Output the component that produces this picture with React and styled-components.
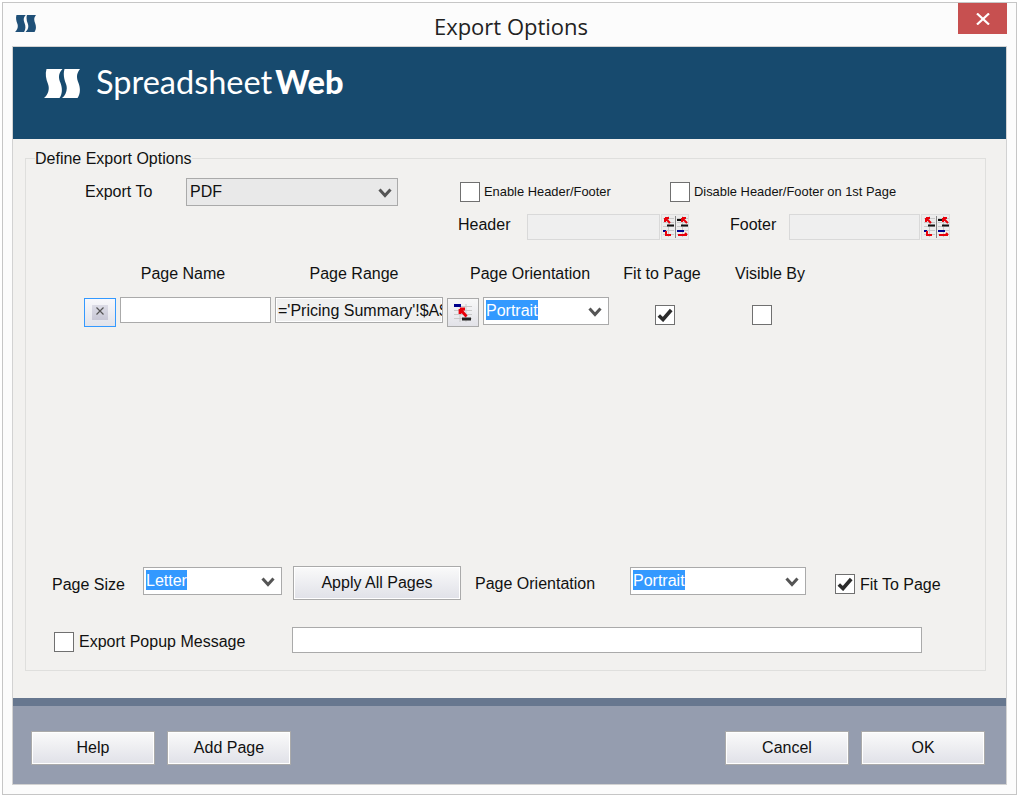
import React from "react"
import styled, { createGlobalStyle } from "styled-components"

const Global = createGlobalStyle`
  html, body { margin: 0; padding: 0; background: #fff; }
  body { font-family: "Liberation Sans", Arial, sans-serif; color: #111; }
`

const LogoMark = ({ size = 36, color = "#fff" }) => (
  <svg width={size} height={size * 29 / 36} viewBox="0 0 36 29">
    <path fill={color} d="M2.500 0H18.500C14 5 14.500 9 16.500 14C18.500 19 18.500 25 15.500 29H0C4 26 6 20 4 15C2 10 1 5 2.500 0Z" />
    <path fill={color} d="M20.500 0H36C32 5 32.500 9 34.500 14C36.500 19 36.500 25 33.500 29H18C22 26 24 20 22 15C20 10 19 5 20.500 0Z" />
  </svg>
)

const Chevron = () => (
  <svg width="14" height="10" viewBox="0 0 14 10">
    <path d="M1.500 1.500L7 7.500L12.500 1.500" fill="none" stroke="#555" strokeWidth="3" />
  </svg>
)

const Tick = () => (
  <svg width="16" height="14" viewBox="0 0 16 14">
    <path d="M1.800 7.500L6 11.500L14.200 2" fill="none" stroke="#2b2b2b" strokeWidth="3.600" />
  </svg>
)

const RangeGlyph = ({ x = 0, flip }) => (
  <g transform={`translate(${x} 0)`}>
    <path d="M0 2.500H11M0 6.500H11M0 10.500H11M0 14.500H11M0 18.500H11" stroke="#c9c9c9" />
    <path d="M5.500 0V21" stroke="#c9c9c9" />
    {flip ? (
      <>
        <path d="M0 4H4M4 9.500H11" stroke="#111" strokeWidth="2" />
        <path d="M5 2L10 7M5 2H9M5 2V6" stroke="#e8000a" strokeWidth="2" fill="none" />
        <path d="M0 15H7" stroke="#00008b" strokeWidth="2" />
        <path d="M1 19H10M10 19L8 17" stroke="#e8000a" strokeWidth="2" fill="none" />
      </>
    ) : (
      <>
        <path d="M4 9.500H11" stroke="#111" strokeWidth="2" />
        <path d="M2 2L7 7M2 2H6M2 2V6" stroke="#e8000a" strokeWidth="2" fill="none" />
        <path d="M0 15H3" stroke="#00008b" strokeWidth="2" />
        <path d="M3 15V19H8" stroke="#e8000a" strokeWidth="2" fill="none" />
      </>
    )}
  </g>
)

const HeaderFooterGlyph = () => (
  <svg width="26" height="22" viewBox="0 0 26 22">
    <RangeGlyph x={1} />
    <path d="M13.500 0V22" stroke="#888" />
    <RangeGlyph x={15} flip />
  </svg>
)

const PickGlyph = () => (
  <svg width="18" height="18" viewBox="0 0 18 18">
    <path d="M0 2.500H18M0 6.500H18M0 10.500H18M0 14.500H18M6 0V18M12 0V18" stroke="#c9c9c9" />
    <path d="M0 1.500H7" stroke="#00008b" strokeWidth="3" />
    <path d="M8 15H17" stroke="#222" strokeWidth="3" />
    <path d="M6 5L12.500 12.500M6 5H11M6 5V10" stroke="#e8000a" strokeWidth="2.800" fill="none" />
  </svg>
)

const CloseGlyph = () => (
  <svg width="14" height="12" viewBox="0 0 14 12">
    <path d="M1 0.500L13 11.500M13 0.500L1 11.500" stroke="#fff" strokeWidth="2.200" />
  </svg>
)

const SmallCross = () => (
  <svg width="8" height="8" viewBox="0 0 8 8">
    <path d="M0.500 0.500L7.500 7.500M7.500 0.500L0.500 7.500" stroke="#555" strokeWidth="1.200" />
  </svg>
)

const Select = ({ value, width, muted, $ml, $mt }) => (
  <SelectBox $w={width} $muted={muted} $ml={$ml} $mt={$mt}>
    <SelectText $muted={muted}>{value}</SelectText>
    <Chevron />
  </SelectBox>
)

const Check = ({ checked }) => <CheckBox>{checked && <Tick />}</CheckBox>

const App = () => (
  <>
    <Global />
    <Window>
      <TitleBar>
        <TitleIcon><LogoMark size={21} color="#1f5078" /></TitleIcon>
        <Title>Export Options</Title>
        <CloseButton><CloseGlyph /></CloseButton>
      </TitleBar>

      <Panel>
        <Banner>
          <LogoMark />
          <Brand>Spreadsheet<strong>Web</strong></Brand>
        </Banner>

        <Content>
          <Group>
            <Legend>Define Export Options</Legend>

            <Row $mt={12} $h={28}>
              <Label $ml={59} $w={101}>Export To</Label>
              <Select value="PDF" width={212} muted />
              <CheckField $ml={62} $w={210}>
                <Check />
                <SmallText>Enable Header/Footer</SmallText>
              </CheckField>
              <CheckField>
                <Check />
                <SmallText>Disable Header/Footer on 1st Page</SmallText>
              </CheckField>
            </Row>

            <Row $mt={8} $h={26}>
              <Label $ml={432} $w={69} $mt={-4}>Header</Label>
              <DisabledInput $w={133} />
              <IconButton $w={28} $h={26} $ml={1} $flat><HeaderFooterGlyph /></IconButton>
              <Label $ml={41} $w={59} $mt={-4}>Footer</Label>
              <DisabledInput $w={131} />
              <IconButton $w={29} $h={26} $ml={1} $flat><HeaderFooterGlyph /></IconButton>
            </Row>

            <Row $mt={22} $h={22}>
              <Heading $ml={74} $w={166} $mt={1}>Page Name</Heading>
              <Heading $w={176} $mt={1}>Page Range</Heading>
              <Heading $w={176} $mt={1}>Page Orientation</Heading>
              <Heading $w={88} $mt={1}>Fit to Page</Heading>
              <Heading $w={128} $mt={1}>Visible By</Heading>
            </Row>

            <Row $mt={13} $h={31} $start>
              <DeleteButton><DeleteSquare><SmallCross /></DeleteSquare></DeleteButton>
              <TextInput $w={151} $ml={4} readOnly value="" />
              <RangeInput readOnly value="='Pricing Summary'!$A$1:$H$40" />
              <IconButton $w={32} $h={29} $ml={4} $mt={1}><PickGlyph /></IconButton>
              <Select value="Portrait" width={126} $ml={4} />
              <CheckSlot $ml={46}><Check checked /></CheckSlot>
              <CheckSlot $ml={77}><Check /></CheckSlot>
            </Row>

            <Row $mt={238} $h={34}>
              <Label $ml={26} $w={91} $mt={3}>Page Size</Label>
              <Select value="Letter" width={139} $mt={-5} />
              <ApplyButton>Apply All Pages</ApplyButton>
              <Label $ml={14} $w={155} $mt={1}>Page Orientation</Label>
              <Select value="Portrait" width={176} $mt={-5} />
              <CheckField $ml={29} $mt={2} $gap={5}>
                <Check checked />
                <Label $mt={1}>Fit To Page</Label>
              </CheckField>
            </Row>

            <Row $mt={27} $h={26}>
              <CheckField $ml={28} $w={238} $gap={5} $mt={4}>
                <Check />
                <Label>Export Popup Message</Label>
              </CheckField>
              <TextInput $w={630} readOnly value="" />
            </Row>
          </Group>
        </Content>

        <Footer>
          <FooterGroup>
            <FooterButton>Help</FooterButton>
            <FooterButton>Add Page</FooterButton>
          </FooterGroup>
          <FooterGroup>
            <FooterButton>Cancel</FooterButton>
            <FooterButton>OK</FooterButton>
          </FooterGroup>
        </Footer>
      </Panel>
    </Window>
  </>
)

const Window = styled.div`
  box-sizing: border-box;
  width: 1015px;
  height: 793px;
  margin: 2px 0 0 2px;
  padding: 0 9px 9px;
  border: 1px solid #c6c6c6;
  background: #fcfcfc;
  display: flex;
  flex-direction: column;
`

const TitleBar = styled.div`
  height: 43px;
  margin: 0 -9px;
  padding: 0 9px 0 12px;
  display: grid;
  grid-template-columns: 1fr auto 1fr;
  align-items: start;
`

const TitleIcon = styled.div`
  margin-top: 12px;
`

const Title = styled.div`
  font-family: "Open Sans", sans-serif;
  font-size: 22px;
  line-height: 28px;
  margin-top: 9px;
  color: #222;
`

const CloseButton = styled.div`
  justify-self: end;
  width: 49px;
  height: 31px;
  background: #c75050;
  display: flex;
  align-items: center;
  justify-content: center;
`

const Panel = styled.div`
  flex: 1;
  border: 1px solid #d2d2d2;
  display: flex;
  flex-direction: column;
`

const Banner = styled.div`
  height: 92px;
  flex: none;
  box-sizing: border-box;
  padding: 0 0 19px 31px;
  background: #174a6e;
  display: flex;
  align-items: center;
  gap: 16px;
`

const Brand = styled.div`
  font-family: Lato, sans-serif;
  font-size: 32.500px;
  line-height: 34px;
  margin-top: -3px;
  color: #fff;
  strong { font-weight: 900; margin-left: 3px; }
`

const Content = styled.div`
  height: 559px;
  flex: none;
  box-sizing: border-box;
  padding: 11px 20px 0 12px;
  background: #f2f1ef;
`

const Group = styled.fieldset`
  margin: 0;
  padding: 0 0 17px;
  border: 1px solid #dfdfdd;
  min-width: 0;
`

const Legend = styled.legend`
  margin-left: 9px;
  padding: 0;
  font-size: 16px;
  line-height: 16px;
  position: relative;
  top: 1px;
`

const Row = styled.div`
  display: flex;
  align-items: ${p => (p.$start ? "flex-start" : "center")};
  height: ${p => p.$h}px;
  margin-top: ${p => p.$mt}px;
`

const Label = styled.div`
  font-size: 16px;
  line-height: 20px;
  white-space: nowrap;
  flex: none;
  width: ${p => (p.$w ? `${p.$w}px` : "auto")};
  margin-left: ${p => p.$ml || 0}px;
  margin-top: ${p => p.$mt || 0}px;
`

const Heading = styled(Label)`
  text-align: center;
`

const SmallText = styled.span`
  font-size: 12.900px;
  line-height: 20px;
  white-space: nowrap;
`

const SelectBox = styled.div`
  box-sizing: border-box;
  flex: none;
  width: ${p => p.$w}px;
  height: 28px;
  margin-left: ${p => p.$ml || 0}px;
  margin-top: ${p => p.$mt || 0}px;
  padding: 2px ${p => (p.$muted ? 5 : 6)}px 4px 2px;
  border: 1px solid #aaa;
  background: ${p => (p.$muted ? "#e9e9e9" : "#fff")};
  display: flex;
  align-items: center;
  justify-content: space-between;
  svg { margin-top: 4px; }
`

const SelectText = styled.span`
  display: inline-block;
  height: 20px;
  font-size: 16px;
  line-height: 22px;
  padding-left: ${p => (p.$muted ? "1px" : "0")};
  background: ${p => (p.$muted ? "transparent" : "#3399ff")};
  color: ${p => (p.$muted ? "#111" : "#fff")};
`

const CheckBox = styled.div`
  box-sizing: border-box;
  width: 20px;
  height: 20px;
  flex: none;
  border: 1px solid #707070;
  background: #fff;
  display: flex;
  align-items: center;
  justify-content: center;
`

const CheckField = styled.div`
  display: flex;
  align-items: center;
  flex: none;
  gap: ${p => p.$gap || 4}px;
  width: ${p => (p.$w ? `${p.$w}px` : "auto")};
  margin-left: ${p => p.$ml || 0}px;
  margin-top: ${p => p.$mt || 0}px;
`

const CheckSlot = styled.div`
  margin-top: 8px;
  margin-left: ${p => p.$ml}px;
`

const TextInput = styled.input`
  box-sizing: border-box;
  flex: none;
  width: ${p => p.$w}px;
  height: 26px;
  margin: 0 0 0 ${p => p.$ml || 0}px;
  border: 1px solid #aaa;
  background: #fff;
  outline: none;
`

const DisabledInput = styled.div`
  box-sizing: border-box;
  flex: none;
  width: ${p => p.$w}px;
  height: 26px;
  border: 1px solid #d9d9d9;
  background: #efefef;
`

const RangeInput = styled.input`
  box-sizing: border-box;
  flex: none;
  width: 168px;
  height: 26px;
  margin: 0 0 0 4px;
  padding: 2px 0 0 2px;
  border: 1px solid #aaa;
  background: #f0f0f0;
  box-shadow: inset 0 0 0 1px #fff;
  outline: none;
  font-family: "Liberation Sans", Arial, sans-serif;
  font-size: 16px;
  color: #111;
`

const IconButton = styled.div`
  box-sizing: border-box;
  flex: none;
  width: ${p => p.$w}px;
  height: ${p => p.$h}px;
  margin-left: ${p => p.$ml || 0}px;
  margin-top: ${p => p.$mt || 0}px;
  border: 1px solid ${p => (p.$flat ? "#dcdcdc" : "#aaa")};
  background: ${p => (p.$flat ? "#ececec" : "linear-gradient(#f8f8f8, #e2e2e8)")};
  display: flex;
  align-items: center;
  justify-content: center;
`

const DeleteButton = styled.div`
  box-sizing: border-box;
  flex: none;
  width: 32px;
  height: 29px;
  margin: 1px 0 0 58px;
  border: 1px solid #3399ff;
  background: linear-gradient(#f8f8fb, #e2e3ea);
  display: flex;
  align-items: center;
  justify-content: center;
`

const DeleteSquare = styled.div`
  width: 16px;
  height: 15px;
  padding-bottom: 3px;
  box-sizing: border-box;
  background: linear-gradient(#dcdce6, #c8c8d6);
  display: flex;
  align-items: center;
  justify-content: center;
`

const PushButton = styled.div`
  box-sizing: border-box;
  flex: none;
  font-size: 16px;
  line-height: 20px;
  border: 1px solid #aaa;
  box-shadow: inset 0 0 0 1px #fff;
  background: linear-gradient(#fafafa, #e0e1e8);
  display: flex;
  align-items: center;
  justify-content: center;
`

const ApplyButton = styled(PushButton)`
  width: 168px;
  height: 34px;
  margin-left: 11px;
`

const Footer = styled.div`
  flex: 1;
  box-sizing: border-box;
  padding: 25px 21px 0 18px;
  background: #959daf;
  border-top: 8px solid #67778f;
  display: flex;
  justify-content: space-between;
  align-items: flex-start;
`

const FooterGroup = styled.div`
  display: flex;
  gap: 12px;
`

const FooterButton = styled(PushButton)`
  width: 124px;
  height: 34px;
`

export default App
